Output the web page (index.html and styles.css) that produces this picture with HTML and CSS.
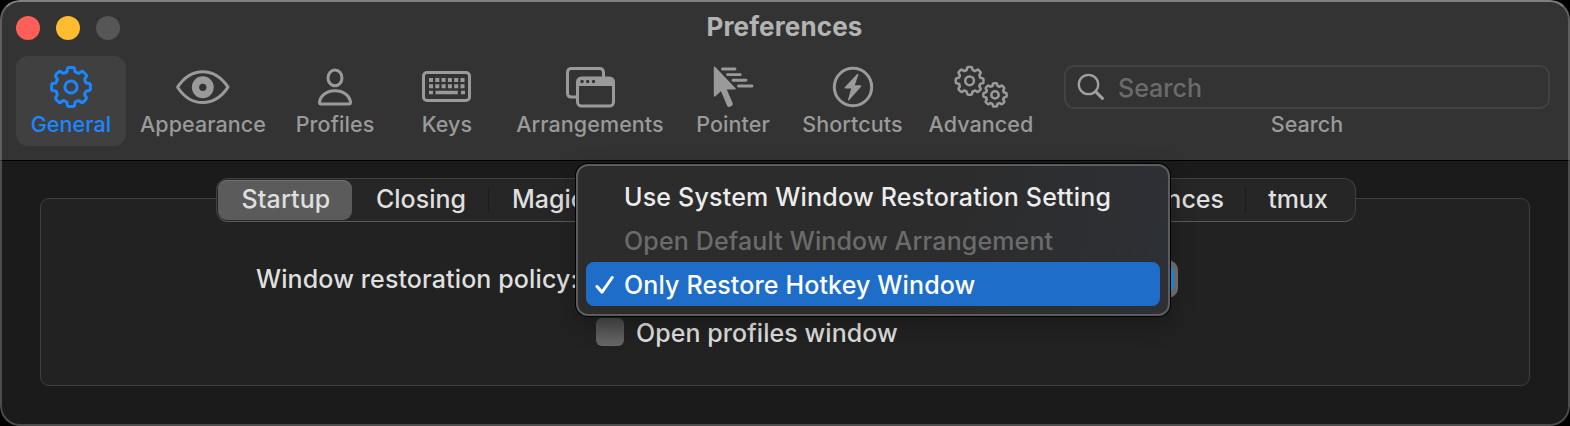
FILE: index.html
```
<!DOCTYPE html>
<html lang="en">
<head>
<meta charset="utf-8">
<title>Preferences</title>
<link rel="stylesheet" href="styles.css">
</head>
<body>
<svg class="defs" width="0" height="0" aria-hidden="true">
  <defs>
    <path id="tooth" d="M-4.6-14.8Q-3.9-15.2-3.8-16.4L-3.6-18Q-3.4-19.4-2-19.4H2Q3.4-19.4 3.6-18L3.8-16.4Q3.9-15.2 4.6-14.8Q6-14.2 7.21-13.72" vector-effect="non-scaling-stroke"/>
    <g id="gear">
      <use href="#tooth"/>
      <use href="#tooth" transform="rotate(45)"/>
      <use href="#tooth" transform="rotate(90)"/>
      <use href="#tooth" transform="rotate(135)"/>
      <use href="#tooth" transform="rotate(180)"/>
      <use href="#tooth" transform="rotate(225)"/>
      <use href="#tooth" transform="rotate(270)"/>
      <use href="#tooth" transform="rotate(315)"/>
      <circle r="6.1" vector-effect="non-scaling-stroke"/>
    </g>
  </defs>
</svg>
<div class="window">
  <header class="toolbar">
    <div class="titlebar">
      <div class="lights"><i class="light red"></i><i class="light yellow"></i><i class="light gray"></i></div>
      <h1 class="title">Preferences</h1>
    </div>
    <div class="items">
      <div class="item general active">
        <svg class="icon" viewBox="0 0 60 48"><use href="#gear" x="30" y="24"/></svg>
        <span class="label">General</span>
      </div>
      <div class="item appearance">
        <svg class="icon" viewBox="0 0 60 48"><path d="M4.6 24.2C11 14.5 20 8.8 29.8 8.8S48.500 14.500 55 24.200C48.500 34 39.600 39.600 29.800 39.600S11 34 4.600 24.200Z"/><circle cx="29.800" cy="24.300" r="7.300" stroke-width="7.300"/></svg>
        <span class="label">Appearance</span>
      </div>
      <div class="item profiles">
        <svg class="icon" viewBox="0 0 60 48"><ellipse cx="30" cy="14.900" rx="7" ry="7.900"/><path d="M16 41H44Q45.700 41 45.500 39C44.500 32.600 38.500 27.800 30 27.800S15.500 32.600 14.500 39Q14.300 41 16 41Z"/></svg>
        <span class="label">Profiles</span>
      </div>
      <div class="item keys">
        <svg class="icon" viewBox="0 0 60 48"><rect x="6.500" y="9.500" width="46" height="28" rx="3.500"/><path class="dots" d="M12 17h37M12 23.200h37"/><path d="M12 29.500h4M18.500 29.500h22.300M44 29.500h4" class="space"/></svg>
        <span class="label">Keys</span>
      </div>
      <div class="item arrangements">
        <svg class="icon" viewBox="0 0 60 48"><path d="M16 34H11.500Q7.500 34 7.500 30V9.500Q7.500 5.500 11.500 5.500H39.500Q43.500 5.500 43.500 9.500V14"/><rect x="17.500" y="15" width="36" height="28" rx="4"/><path class="solid" fill-rule="evenodd" d="M17 18.500Q17 14 21 14H50Q54 14 54 18.500V23H17ZM20.400 18.500a1.700 1.700 0 1 0 3.400 0a1.700 1.700 0 1 0-3.400 0ZM26 18.500a1.700 1.700 0 1 0 3.400 0a1.700 1.700 0 1 0-3.400 0ZM31.800 18.500a1.700 1.700 0 1 0 3.400 0a1.700 1.700 0 1 0-3.400 0Z"/></svg>
        <span class="label">Arrangements</span>
      </div>
      <div class="item pointer">
        <svg class="icon" viewBox="0 0 60 48"><path class="solid" d="M10.800 4V32.500Q11 34.500 12.400 33.300L18 28.200 24 42.500Q24.700 44.500 26.700 43.700L28.600 42.900Q30.400 42 29.600 40L23.800 26.600H31.500Q33.500 26.500 32.300 25L12.300 4Q11 3 10.800 4Z"/><path d="M19.500 6H32M24.500 11.600H37.300M30 17.200H43M35.500 23H49" stroke-width="2.900"/></svg>
        <span class="label">Pointer</span>
      </div>
      <div class="item shortcuts">
        <svg class="icon" viewBox="0 0 60 48"><circle cx="30" cy="24" r="18.700"/><path class="solid" d="M34.200 11 21.700 24.200Q21 25.300 22.300 25.400H28.200L25 36.500Q25 38.300 26.300 37.100L38.200 23.600Q38.800 22.400 37.500 22.300H31.800L35.400 11.700Q35.300 10 34.200 11Z"/></svg>
        <span class="label">Shortcuts</span>
      </div>
      <div class="item advanced">
        <svg class="icon" viewBox="0 0 60 48"><g transform="translate(18.600 17.800) scale(.715)"><use href="#gear"/></g><g transform="translate(44 31.900) scale(.6)"><use href="#gear"/></g></svg>
        <span class="label">Advanced</span>
      </div>
      <div class="search">
        <div class="field">
          <svg class="lens" viewBox="0 0 28 28"><circle cx="11.500" cy="11.500" r="9.700"/><path d="M18.600 18.600 25.400 25.400" stroke-width="3"/></svg>
          <span class="placeholder">Search</span>
        </div>
        <span class="label">Search</span>
      </div>
    </div>
  </header>
  <main class="content">
    <section class="group">
      <div class="tabs">
        <div class="tab startup selected">Startup</div>
        <div class="tab closing">Closing</div>
        <div class="tab magic">Magic</div>
        <div class="tab prefs">Preferences</div>
        <div class="tab tmux">tmux</div>
      </div>
      <div class="row policy">
        <span class="policy-label">Window restoration policy:</span>
        <div class="popup"><span class="arrows"></span></div>
      </div>
      <div class="row check-row"><i class="checkbox"></i><span class="check-label">Open profiles window</span></div>
    </section>
  </main>
</div>
<div class="menu">
  <div class="option first">Use System Window Restoration Setting</div>
  <div class="option disabled">Open Default Window Arrangement</div>
  <div class="option chosen"><svg class="tick" viewBox="0 0 20 20"><path d="M2 11.500 7 17.200 17.200 2.500"/></svg>Only Restore Hotkey Window</div>
</div>
</body>
</html>
```
FILE: styles.css
```
* { box-sizing: border-box; }
body {
  margin: 0;
  width: 1570px;
  height: 426px;
  overflow: hidden;
  background: #000;
  color: #dfdfdf;
  font: 500 25px/30px Inter, "Liberation Sans", sans-serif;
  white-space: nowrap;
}
.defs { position: absolute; }
.window {
  position: relative;
  display: flex;
  flex-direction: column;
  height: 426px;
  border-radius: 20px;
  overflow: hidden;
  background: #1b1b1b;
}
.window::after {
  content: "";
  position: absolute;
  inset: 0;
  border: 2px solid rgba(255, 255, 255, .22);
  border-top-color: rgba(255, 255, 255, .38);
  border-radius: 20px;
}
.toolbar {
  height: 161px;
  flex: none;
  background: #333;
  border-bottom: 1px solid #000;
}
.titlebar {
  display: grid;
  grid-template-columns: 120px 1fr 120px;
  align-items: center;
  height: 56px;
  padding: 0 1px 0 0;
}
.lights { display: flex; gap: 16px; padding-left: 16px; }
.light { width: 24px; height: 24px; border-radius: 50%; }
.red { background: #ff5f57; }
.yellow { background: #febc2e; }
.gray { background: #565656; }
.title {
  margin: 0;
  text-align: center;
  font-size: 26px;
  line-height: 54px;
  height: 56px;
  font-weight: 700;
  color: #b3b3b3;
  letter-spacing: .12px;
}
.items { display: flex; padding-left: 16px; color: #9a9a9a; }
.item {
  display: flex;
  flex-direction: column;
  align-items: center;
  height: 90px;
  padding-top: 7px;
  border-radius: 12px;
}
.general { width: 110px; }
.appearance { width: 154px; }
.profiles { width: 110px; }
.keys { width: 114px; }
.arrangements { width: 172px; }
.pointer { width: 114px; }
.shortcuts { width: 125px; }
.advanced { width: 132px; }
.active { background: #404040; color: #1a86ff; }
.icon {
  width: 60px;
  height: 48px;
  fill: none;
  stroke: currentColor;
  stroke-width: 3px;
  stroke-linecap: round;
  stroke-linejoin: round;
}
.advanced .icon { stroke-width: 2.500px; }
.icon .solid { fill: currentColor; stroke: none; }
.icon .dots { stroke-linecap: butt; stroke-width: 4px; stroke-dasharray: 4 2.300; }
.icon .space { stroke-linecap: butt; stroke-width: 3.600px; }
.label { font-size: 21.5px; line-height: 26px; letter-spacing: .08px; }
.search {
  display: flex;
  flex-direction: column;
  align-items: center;
  width: 486px;
  margin: 9px 0 0 17px;
}
.field {
  display: flex;
  align-items: center;
  width: 486px;
  height: 44px;
  margin-bottom: 2px;
  padding-left: 11px;
  border: 2px solid #424242;
  border-radius: 10px;
}
.lens { width: 28px; height: 28px; fill: none; stroke: #a0a0a0; stroke-width: 2.300px; stroke-linecap: round; }
.placeholder { margin-left: 13px; padding-top: 2px; color: #6b6b6b; }
.content { flex: 1; padding: 37px 40px 40px; }
.group {
  display: flex;
  flex-direction: column;
  height: 188px;
  border: 1px solid #3f3f3f;
  border-radius: 9px;
  background: #222;
}
.tabs {
  display: flex;
  align-items: center;
  width: 1140px;
  height: 44px;
  margin: -21px 0 0 175px;
  padding: 1px;
  border: 1px solid #404040;
  border-bottom-color: #5a5a5a;
  border-radius: 12px;
  background: #262626;
}
.tab { display: flex; align-items: center; height: 40px; padding-bottom: 2px; }
.startup { width: 134px; padding-left: 2px; justify-content: center; letter-spacing: .1px; }
.selected { border-radius: 9px; background: #5b5b5b; box-shadow: inset 0 1px #717171; }
.closing { width: 137px; padding-left: 1px; justify-content: center; }
.magic { width: 180px; padding-left: 23px; }
.prefs { width: 577px; padding-right: 22px; justify-content: flex-end; }
.tmux { flex: 1; justify-content: center; padding-right: 4px; }
.closing, .prefs { position: relative; }
.closing::after, .prefs::after {
  content: "";
  position: absolute;
  right: 0;
  top: 8px;
  width: 1px;
  height: 24px;
  background: #1c1c1c;
}
.row { display: flex; align-items: center; }
.policy { height: 38px; margin-top: 38px; padding-left: 215px; }
.policy-label { width: 321px; letter-spacing: .12px; }
.popup {
  display: flex;
  justify-content: flex-end;
  width: 601px;
  height: 38px;
  padding: 5px 4px;
  border-radius: 10px;
  background: #747474;
}
.arrows { width: 30px; border-radius: 7px; background: #2196ee; }
.check-row { height: 30px; margin-top: 19px; padding-left: 555px; }
.checkbox { width: 28px; height: 28px; border-radius: 6px; background: linear-gradient(#4b4b4b, #686868); }
.check-label { margin-left: 12px; padding-top: 2px; letter-spacing: .06px; }
.menu {
  position: absolute;
  left: 576px;
  top: 164px;
  width: 594px;
  height: 152px;
  padding: 8px;
  border: 2px solid #5c5c5c;
  border-radius: 12px;
  background: linear-gradient(100deg, #2c2c2c 60%, #2d3035);
  box-shadow: 0 0 0 1px #000, 0 8px 24px rgba(0, 0, 0, .3);
}
.option { position: relative; height: 44px; padding-left: 38px; line-height: 46px; letter-spacing: .14px; color: #ececec; }
.first { letter-spacing: .2px; }
.disabled { color: #6b6b6b; }
.chosen { border-radius: 8px; background: #1e6ec9; color: #fff; }
.tick {
  position: absolute;
  left: 9px;
  top: 13px;
  width: 20px;
  height: 20px;
  fill: none;
  stroke: #fff;
  stroke-width: 3px;
  stroke-linecap: round;
  stroke-linejoin: round;
}
```
